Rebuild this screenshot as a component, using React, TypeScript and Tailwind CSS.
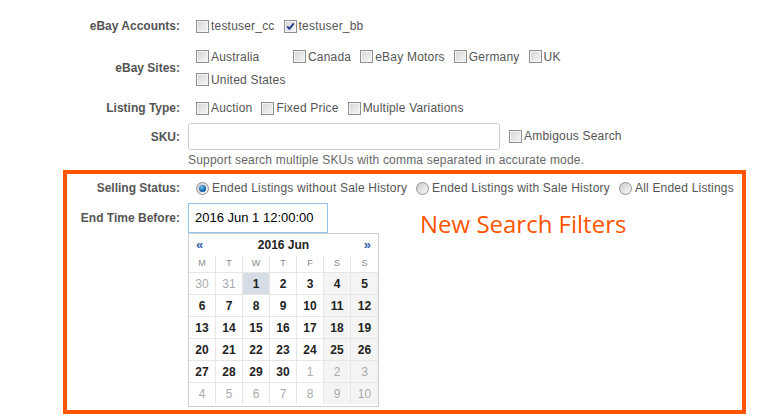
import React from 'react';

type Day = { d: number; other?: boolean; sel?: boolean };

const weeks: Day[][] = [
  [{ d: 30, other: true }, { d: 31, other: true }, { d: 1, sel: true }, { d: 2 }, { d: 3 }, { d: 4 }, { d: 5 }],
  [{ d: 6 }, { d: 7 }, { d: 8 }, { d: 9 }, { d: 10 }, { d: 11 }, { d: 12 }],
  [{ d: 13 }, { d: 14 }, { d: 15 }, { d: 16 }, { d: 17 }, { d: 18 }, { d: 19 }],
  [{ d: 20 }, { d: 21 }, { d: 22 }, { d: 23 }, { d: 24 }, { d: 25 }, { d: 26 }],
  [{ d: 27 }, { d: 28 }, { d: 29 }, { d: 30 }, { d: 1, other: true }, { d: 2, other: true }, { d: 3, other: true }],
  [4, 5, 6, 7, 8, 9, 10].map((d) => ({ d, other: true })),
];

const dayNames = ['M', 'T', 'W', 'T', 'F', 'S', 'S'];

const Box: React.FC<{ checked?: boolean }> = ({ checked }) => (
  <span className="relative inline-block w-[13px] h-[13px] shrink-0 border border-[#8f8f8f] bg-gradient-to-br from-[#d4d4d4] to-[#f7f7f7] shadow-[inset_0_0_0_1px_#f4f4f4]">
    {checked && (
      <svg viewBox="0 0 11 11" className="absolute inset-0 w-[11px] h-[11px]">
        <path d="M2.2 5.4 L4.4 7.8 L8.8 2.4" fill="none" stroke="#1d3f8f" strokeWidth="1.9" />
      </svg>
    )}
  </span>
);

const Check: React.FC<{ label: string; checked?: boolean; className?: string }> = ({ label, checked, className }) => (
  <label className={`flex items-center gap-[2px] shrink-0 whitespace-nowrap ${className ?? 'mr-[9px]'}`}>
    <Box checked={checked} />
    <span className="tracking-[0.2px]">{label}</span>
  </label>
);

const Radio: React.FC<{ label: string; checked?: boolean }> = ({ label, checked }) => (
  <label className="flex items-center gap-[3px] mr-[9px] shrink-0 whitespace-nowrap">
    <span className="relative flex items-center justify-center w-[13px] h-[13px] rounded-full border border-[#8f8f8f] bg-gradient-to-br from-[#cfcfcf] to-[#f7f7f7]">
      {checked && (
        <span className="w-[7px] h-[7px] rounded-full bg-[radial-gradient(circle_at_40%_35%,#7fc4f0,#0d63a8_60%,#083c70)]" />
      )}
    </span>
    <span className="tracking-[0.2px]">{label}</span>
  </label>
);

const Label: React.FC<{ text: string; w: string }> = ({ text, w }) => (
  <div className={`${w} shrink-0 text-right font-bold text-[#555] whitespace-nowrap`}>{text}</div>
);

const Calendar: React.FC = () => (
  <div className="w-[191px] border border-[#cfcfcf] bg-white pb-[2px]">
    <div className="h-[22px] flex items-center justify-between px-[7px]">
      <span className="text-[#2c5fa8] font-bold text-[13px]">«</span>
      <span className="font-bold text-[#222]">2016 Jun</span>
      <span className="text-[#2c5fa8] font-bold text-[13px]">»</span>
    </div>
    <div className="grid grid-cols-[repeat(7,27px)]">
      {dayNames.map((n, i) => (
        <div
          key={i}
          className={`h-[17px] flex items-center justify-center text-[9px] text-[#888] border-b border-[#e6e6e6] ${i < 6 ? 'border-r' : ''}`}
        >
          {n}
        </div>
      ))}
      {weeks.flat().map((day, i) => {
        const col = i % 7;
        const weekend = col >= 5;
        const last = i >= 35;
        return (
          <div
            key={i}
            className={`${last ? 'h-[21px]' : 'h-[22px] border-b'} flex items-center justify-center border-[#e6e6e6] ${col < 6 ? 'border-r' : ''} ${
              day.sel ? 'bg-[#d6dde7]' : weekend ? 'bg-[#f4f4f4]' : 'bg-white'
            } ${day.other ? 'text-[#aaa] font-normal' : 'text-[#222] font-bold'}`}
          >
            {day.d}
          </div>
        );
      })}
    </div>
  </div>
);

export default function App() {
  return (
    <div className="w-[762px] h-[417px] bg-white overflow-hidden text-[12px] text-[#555] font-['Liberation_Sans',Arial,sans-serif] pt-[15px]">
      <div className="flex items-center h-[22px]">
        <Label text="eBay Accounts:" w="w-[180px]" />
        <div className="flex items-center pl-[16px]">
          <Check label="testuser_cc" />
          <Check label="testuser_bb" checked />
        </div>
      </div>

      <div className="flex items-center mt-[8px] h-[46px]">
        <Label text="eBay Sites:" w="w-[180px]" />
        <div className="flex flex-col pl-[16px]">
          <div className="flex items-center h-[23px]">
            <Check label="Australia" className="w-[97px]" />
            <Check label="Canada" />
            <Check label="eBay Motors" />
            <Check label="Germany" />
            <Check label="UK" />
          </div>
          <div className="flex items-center h-[23px]">
            <Check label="United States" />
          </div>
        </div>
      </div>

      <div className="flex items-center mt-[6px] h-[22px]">
        <Label text="Listing Type:" w="w-[180px]" />
        <div className="flex items-center pl-[16px]">
          <Check label="Auction" />
          <Check label="Fixed Price" />
          <Check label="Multiple Variations" />
        </div>
      </div>

      <div className="flex items-center mt-[4px] h-[27px]">
        <Label text="SKU:" w="w-[180px]" />
        <div className="flex items-start pl-[8px] h-full">
          <div className="w-[312px] h-[27px] border border-[#ccc] rounded-[3px]" />
          <Check label="Ambigous Search" className="ml-[9px] mt-[4px]" />
        </div>
      </div>

      <div className="pl-[188px] h-[16px] mt-[2px] leading-[16px] text-[#666] tracking-[0.2px]">
        Support search multiple SKUs with comma separated in accurate mode.
      </div>

      <div className="ml-[63px] mt-[2px] w-[683px] h-[244px] border-[4px] border-[#ff5500]">
        <div className="flex items-center mt-[3px] h-[22px]">
          <Label text="Selling Status:" w="w-[113px]" />
          <div className="flex items-center pl-[16px]">
            <Radio label="Ended Listings without Sale History" checked />
            <Radio label="Ended Listings with Sale History" />
            <Radio label="All Ended Listings" />
          </div>
        </div>
        <div className="flex items-start mt-[4px]">
          <div className="w-[113px] h-[29px] flex items-center justify-end font-bold text-[#555] shrink-0">
            End Time Before:
          </div>
          <div className="pl-[8px] flex flex-col">
            <div className="w-[140px] h-[30px] border border-[#93c5ec] flex items-center pl-[6px] text-[13px] text-black">
              2016 Jun 1 12:00:00
            </div>
            <Calendar />
          </div>
          <div className="ml-[41px] mt-[6px] text-[24px] leading-[30px] text-[#ff5500] font-['Open_Sans','Noto_Sans',sans-serif]">
            New Search Filters
          </div>
        </div>
      </div>
    </div>
  );
}
